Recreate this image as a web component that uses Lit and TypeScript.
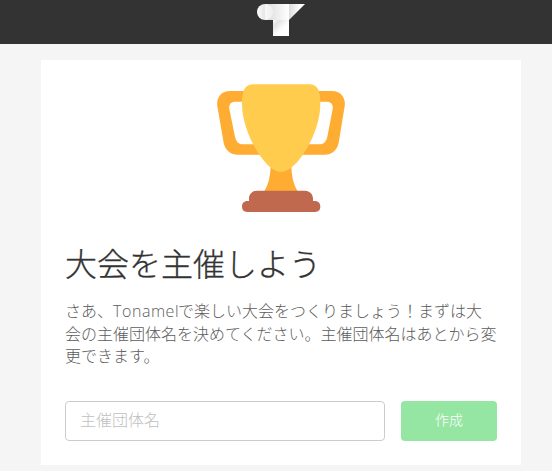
import { LitElement, html, css } from "lit";
import { customElement } from "lit/decorators.js";

@customElement("app-root")
export class AppRoot extends LitElement {
  static styles = css`
    :host {
      display: block;
      height: 471px;
      overflow: hidden;
      background: #f5f5f5;
      font-family: "Noto Sans CJK JP", sans-serif;
      font-weight: 300;
      color: #333;
    }
    * { box-sizing: border-box; }
    header {
      height: 44px;
      background: #333;
      display: flex;
      justify-content: center;
      padding-top: 4px;
    }
    .logo { width: 48px; height: 32px; margin-left: 10px; }
    main {
      width: 480px;
      height: 405px;
      margin: 16px 0 0 41px;
      padding: 24px 24px 0;
      background: #fff;
      display: flex;
      flex-direction: column;
    }
    .trophy { width: 128px; height: 128px; align-self: center; display: block; }
    h1 {
      margin: 26px 0 0;
      font-size: 32px;
      line-height: 48px;
      font-weight: 300;
      white-space: nowrap;
      -webkit-text-stroke: 0.3px #333;
    }
    p {
      margin: 13px 0 0;
      font-size: 16px;
      line-height: 22.6px;
      color: #5c5c5c;
      white-space: nowrap;
    }
    .latin {
      font-family: "Open Sans", sans-serif;
      display: inline-block;
      width: 65px;
      line-height: 1;
      letter-spacing: 0.55px;
    }
    form { display: flex; gap: 16px; margin-top: 34px; }
    input, button { height: 40px; border-radius: 4px; font-family: inherit; font-weight: 300; margin: 0; }
    input {
      width: 320px;
      border: 1px solid #ccc;
      padding: 0 14px 3px;
      font-size: 16px;
      background: #fff;
    }
    input::placeholder { color: #c0c0c0; opacity: 1; }
    button {
      width: 96px;
      border: 0;
      padding: 0 0 3px;
      background: #95e6a2;
      color: #fff;
      font-size: 14px;
    }
  `;

  render() {
    return html`
      <header>
        <svg class="logo" viewBox="0 0 48 32">
          <defs>
            <linearGradient id="bar" gradientUnits="userSpaceOnUse" x1="8" y1="0" x2="32" y2="0"><stop offset="0" stop-color="#d4d4d4" /><stop offset=".33" stop-color="#e6e6e6" /><stop offset="1" stop-color="#fff" /></linearGradient>
            <linearGradient id="wing"><stop offset="0" stop-color="#dcdcdc" /><stop offset=".7" stop-color="#fff" /></linearGradient>
            <linearGradient id="stem" gradientUnits="userSpaceOnUse" x1="18" y1="14" x2="28" y2="24"><stop offset="0" stop-color="#fafafa" /><stop offset=".35" stop-color="#e2e2e2" /><stop offset=".8" stop-color="#f8f8f8" /><stop offset="1" stop-color="#fff" /></linearGradient>
            <linearGradient id="dot"><stop offset="0" stop-color="#fff" /><stop offset=".46" stop-color="#e6e6e6" /><stop offset=".54" stop-color="#f8f8f8" /><stop offset="1" stop-color="#eee" /></linearGradient>
          </defs>
          <path d="M8 0H32V16H8Z" fill="url(#bar)" />
          <path d="M32 0H48L32 16Z" fill="url(#wing)" />
          <path d="M16 16H32V32H16Z" fill="url(#stem)" />
          <circle cx="8" cy="8" r="8" fill="url(#dot)" />
        </svg>
      </header>
      <main>
        <svg class="trophy" viewBox="51 42 384 384">
          <path fill="#ffac33" fill-rule="evenodd" d="M140 63H90C64 63 48 83 52 109L71 218C75 240 92 254 114 254H374C395 254 412 240 416 218L434 109C438 83 422 63 396 63ZM140 95H106C92 95 86 104 88 117L105 200C108 215 116 223 130 223H357C371 223 379 215 382 200L398 117C400 104 394 95 380 95Z" />
          <path fill="#ffac33" d="M212 280C212 325 203 346 193 364H293C283 346 274 325 274 280Z" />
          <path fill="#ffcc4d" d="M163 43H325C351 43 361 57 361 102C361 190 290 306 243 306C197 306 126 190 126 102C126 57 136 43 163 43Z" />
          <path fill="#c1694f" d="M171 362H315C330 362 339 373 339 386V393H345C355 393 361 400 361 409C361 420 356 426 345 426H142C131 426 126 420 126 409C126 400 132 393 142 393H147V386C147 373 156 362 171 362Z" />
        </svg>
        <h1>大会を主催しよう</h1>
        <p>さあ、<span class="latin">Tonamel</span>で楽しい大会をつくりましょう！まずは大<br />会の主催団体名を決めてください。主催団体名はあとから変<br />更できます。</p>
        <form @submit=${(e: Event) => e.preventDefault()}>
          <input type="text" placeholder="主催団体名" />
          <button type="submit">作成</button>
        </form>
      </main>
    `;
  }
}
